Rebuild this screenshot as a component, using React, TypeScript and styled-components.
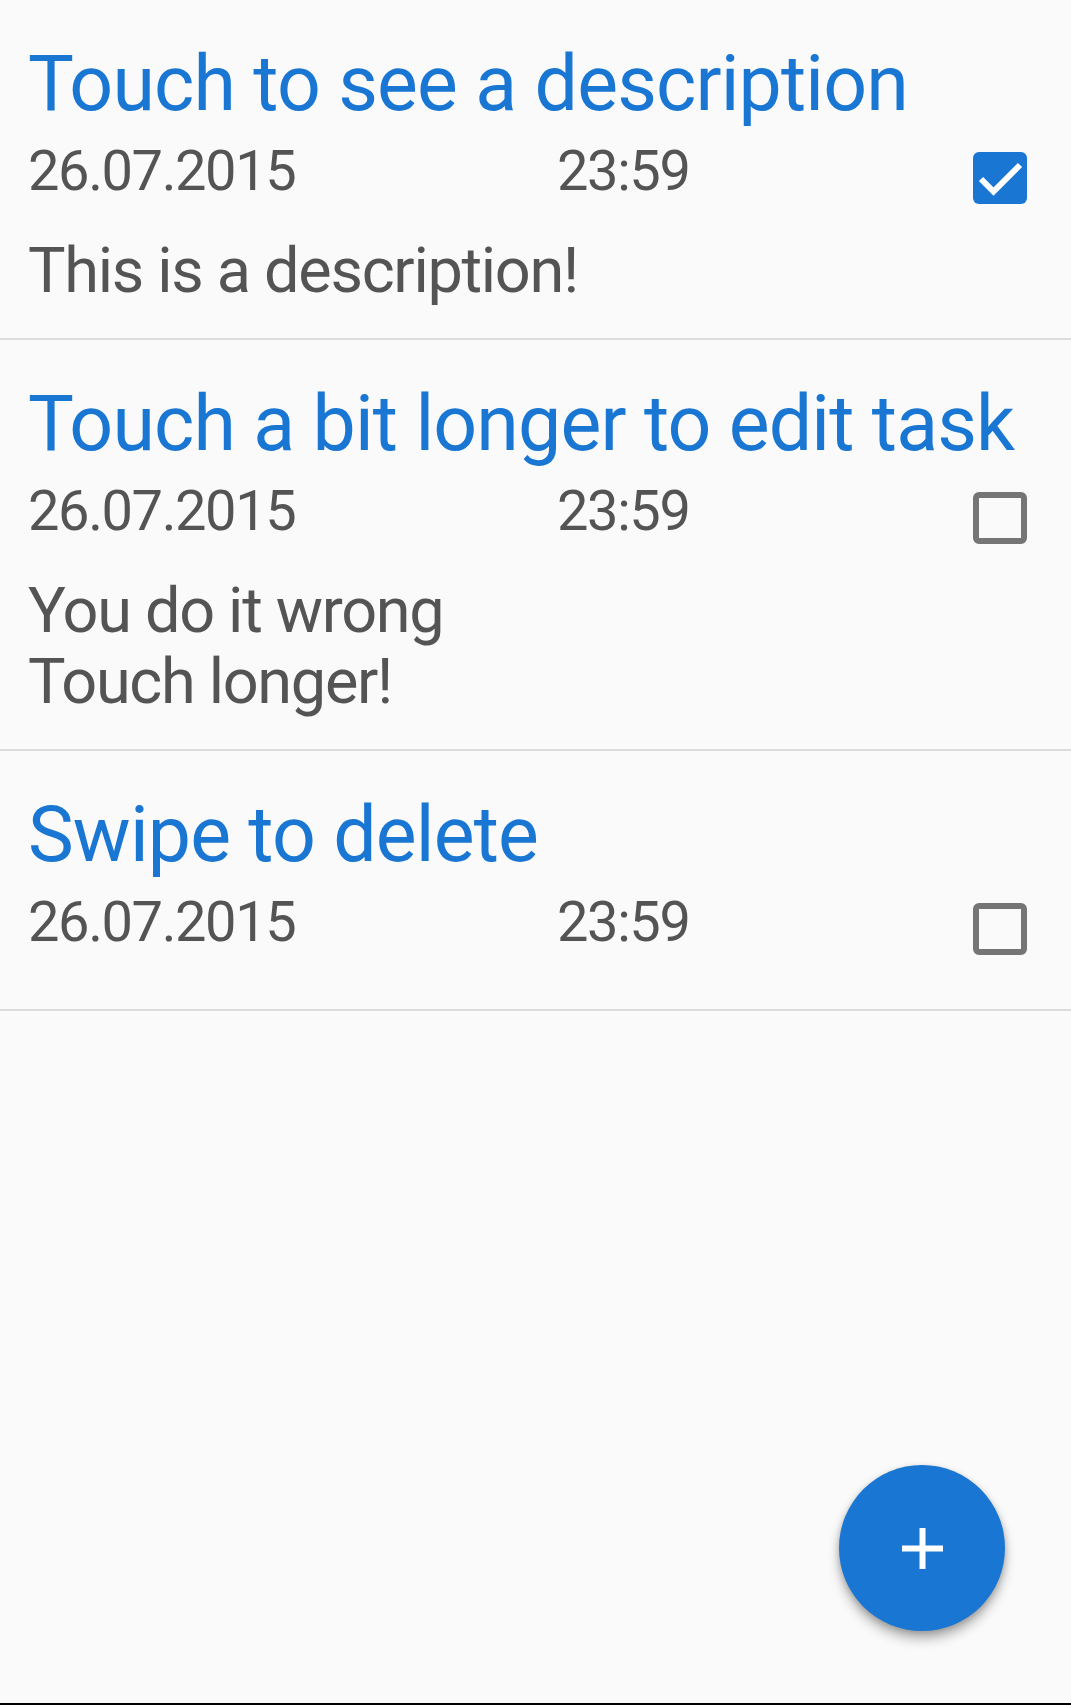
import React from "react";
import styled, { createGlobalStyle } from "styled-components";

const GlobalStyle = createGlobalStyle`
  html, body {
    margin: 0;
    padding: 0;
    background: #fafafa;
  }
  body {
    font-family: Roboto, "Noto Sans", "Liberation Sans", sans-serif;
  }
  * { box-sizing: border-box; }
`;

const Screen = styled.div`
  position: relative;
  height: 1705px;
  background: #fafafa;
  border-bottom: 2px solid #000;
  display: flex;
  flex-direction: column;
  overflow: hidden;
`;

const List = styled.ul`
  list-style: none;
  margin: 0;
  padding: 0;
  display: flex;
  flex-direction: column;
`;

const Row = styled.li`
  display: flex;
  flex-direction: column;
  padding: 39px 28px 32px 28px;
  border-bottom: 2px solid #dcdcdc;
`;

const Title = styled.div`
  font-size: 77px;
  line-height: 90px;
  letter-spacing: -0.85px;
  color: #1976d2;
  white-space: nowrap;
`;

const Meta = styled.div`
  display: grid;
  grid-template-columns: 529px 1fr auto;
  align-items: start;
  margin-top: 9px;
  padding-bottom: 22px;
  padding-right: 16px;
`;

const MetaText = styled.span`
  font-size: 56px;
  line-height: 66px;
  letter-spacing: -1.4px;
  color: #545454;
`;

const Box = styled.div<{ $checked: boolean }>`
  width: 54px;
  height: 52px;
  margin-top: 14px;
  border-radius: 6px;
  background: ${(p) => (p.$checked ? "#1976d2" : "transparent")};
  border: ${(p) => (p.$checked ? "none" : "6px solid #757575")};
  display: flex;
  align-items: center;
  justify-content: center;
`;

const Description = styled.div`
  margin-top: 9px;
  font-size: 63px;
  line-height: 71px;
  letter-spacing: -1.3px;
  color: #545454;
  white-space: pre-line;
`;

const Fab = styled.button`
  position: absolute;
  left: 839px;
  top: 1465px;
  width: 166px;
  height: 166px;
  border-radius: 50%;
  border: none;
  background: #1976d2;
  box-shadow: 0 8px 12px rgba(0, 0, 0, 0.28), 0 2px 6px rgba(0, 0, 0, 0.18);
  display: flex;
  align-items: center;
  justify-content: center;
  padding: 0;
`;

type Task = {
  title: string;
  date: string;
  time: string;
  done: boolean;
  description?: string;
};

const tasks: Task[] = [
  {
    title: "Touch to see a description",
    date: "26.07.2015",
    time: "23:59",
    done: true,
    description: "This is a description!",
  },
  {
    title: "Touch a bit longer to edit task",
    date: "26.07.2015",
    time: "23:59",
    done: false,
    description: "You do it wrong\nTouch longer!",
  },
  {
    title: "Swipe to delete",
    date: "26.07.2015",
    time: "23:59",
    done: false,
  },
];

function CheckBox({ checked }: { checked: boolean }) {
  return (
    <Box $checked={checked}>
      {checked && (
        <svg width="54" height="52" viewBox="0 0 54 52">
          <polyline
            points="8,27 20.5,39.5 47,13"
            fill="none"
            stroke="#fff"
            strokeWidth="6"
          />
        </svg>
      )}
    </Box>
  );
}

export default function App() {
  return (
    <>
      <GlobalStyle />
      <Screen>
        <List>
          {tasks.map((t) => (
            <Row key={t.title}>
              <Title>{t.title}</Title>
              <Meta>
                <MetaText>{t.date}</MetaText>
                <MetaText>{t.time}</MetaText>
                <CheckBox checked={t.done} />
              </Meta>
              {t.description && <Description>{t.description}</Description>}
            </Row>
          ))}
        </List>
        <Fab aria-label="Add task">
          <svg width="41" height="41" viewBox="0 0 41 41">
            <rect x="17.5" y="0" width="6" height="41" fill="#fff" />
            <rect x="0" y="17.5" width="41" height="6" fill="#fff" />
          </svg>
        </Fab>
      </Screen>
    </>
  );
}
